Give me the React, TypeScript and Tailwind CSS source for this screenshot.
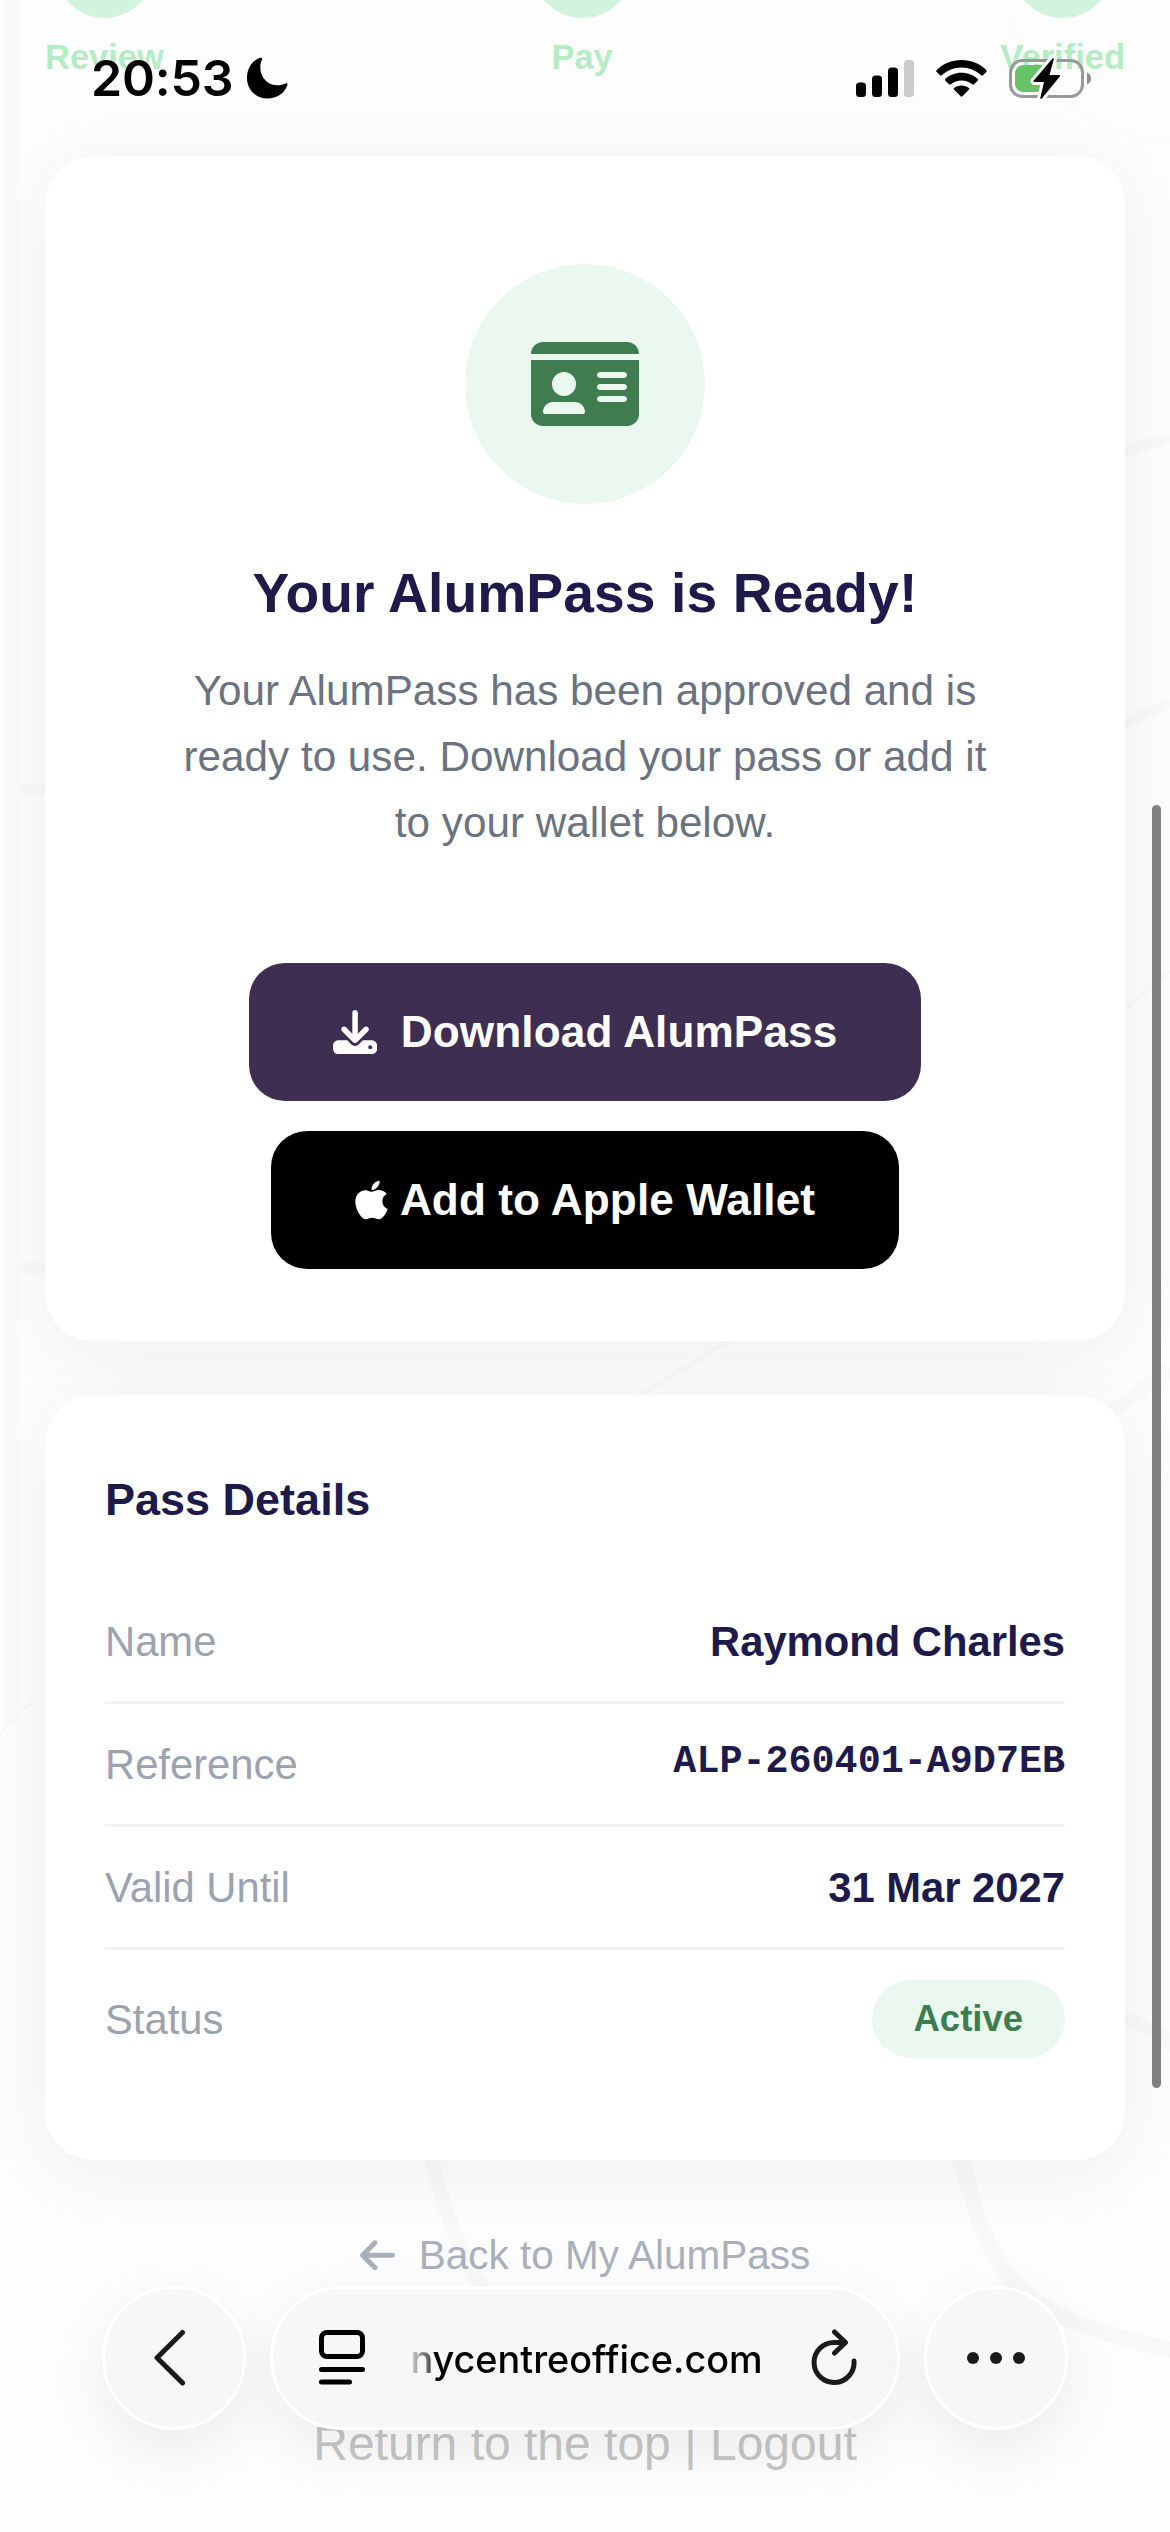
import { FaApple, FaArrowLeft, FaDownload, FaIdCard } from 'react-icons/fa6';

const steps = ['Review', 'Pay', 'Verified'];

const details = [
  { label: 'Name', value: 'Raymond Charles' },
  { label: 'Reference', value: 'ALP-260401-A9D7EB', mono: true },
  { label: 'Valid Until', value: '31 Mar 2027' },
];

const cardShadow = 'shadow-[0_12px_72px_rgba(30,27,75,0.06)]';
const barShadow = 'shadow-[0_20px_60px_rgba(0,0,0,0.07)]';

// Faint curved strokes behind the page content
function BackgroundPattern() {
  return (
    <svg
      className="absolute inset-0 pointer-events-none"
      width="1170"
      height="2532"
      viewBox="0 0 1170 2532"
      fill="none"
      stroke="#f9f9f9"
    >
      <path d="M11 0V1725" strokeWidth="16" stroke="#fafafa" />
      <path d="M1010 20Q1050 130 1170 142" strokeWidth="3" stroke="#fbfbfb" />
      <path d="M1110 456Q1140 446 1170 438" strokeWidth="12" />
      <path d="M1110 730Q1140 716 1170 702" strokeWidth="11" />
      <path d="M1110 1020L1170 972" strokeWidth="4" />
      <path d="M1110 1412L1170 1370" strokeWidth="14" />
      <path d="M640 1396L735 1336" strokeWidth="5" stroke="#f9f9fa" />
      <path d="M20 790H50M20 1268H50" strokeWidth="12" />
      <path d="M0 1735Q20 1705 50 1695" strokeWidth="3" />
      <path d="M430 2150Q444 2230 500 2320" strokeWidth="15" stroke="#f8f8f8" />
      <path d="M961 2150Q975 2235 1012 2280T1180 2352" strokeWidth="16" stroke="#f8f8f8" />
      <path d="M1120 2018Q1150 2026 1176 2046" strokeWidth="15" />
    </svg>
  );
}

function StatusBar() {
  return (
    <div className="absolute inset-x-0 top-0 z-20 flex h-[156px] items-center justify-between pl-[91px] pr-[79px] text-black">
      <div className="flex items-center gap-[13px]">
        <span className="font-[Inter,sans-serif] text-[50px] font-semibold leading-none tracking-[-0.2px]">20:53</span>
        <svg width="42" height="42" viewBox="0 0 42 42">
          <path
            d="M14 .8C15.6 .3 16.5 1.2 16 2.6C13 9 14 18.500 19.500 23.500C25 29 33.500 29.500 39.500 26.500C41 26 41.800 27 41.300 28.500C38.300 36.500 30.500 41.500 21.500 41.500C9.500 41.500 1 32.500 1 21C1 11.500 6 3.800 14 .8Z"
            fill="currentColor"
          />
        </svg>
      </div>
      <div className="flex items-center gap-[22px]">
        <svg width="58" height="37" viewBox="0 0 58 37">
          <rect y="22.500" width="10" height="14.500" rx="3.500" />
          <rect x="16" y="15.500" width="10" height="21.500" rx="3.500" />
          <rect x="32" y="7.500" width="10" height="29.500" rx="3.500" />
          <rect x="48" width="10" height="37" rx="3.500" fill="#cbcbcb" />
        </svg>
        <svg width="51" height="37" viewBox="0 0 51 37">
          <path d="M25.500 0C35.500 0 44 3.800 50.300 9.900C50.900 10.500 50.900 11.300 50.300 11.900L47 15.200C46.500 15.700 45.700 15.700 45.100 15.200C39.900 10.400 33 7.500 25.500 7.500S11.100 10.400 5.900 15.200C5.300 15.700 4.500 15.700 4 15.200L.7 11.900C.1 11.300 .1 10.500 .7 9.900C7 3.800 15.500 0 25.500 0Z" />
          <path d="M25.500 12.700C31.900 12.700 37.500 15 41.600 18.800C42.200 19.400 42.200 20.100 41.600 20.700L38 24.200C37.500 24.700 36.700 24.700 36.200 24.200C33.300 21.800 29.600 20.400 25.500 20.400S17.700 21.800 14.800 24.200C14.300 24.700 13.500 24.700 13 24.200L9.400 20.700C8.800 20.100 8.800 19.400 9.400 18.800C13.500 15 19.100 12.700 25.500 12.700Z" />
          <path d="M25.500 25.500C28.300 25.500 30.900 26.400 32.900 27.900C33.500 28.400 33.500 29.100 33 29.600L26.400 36.300C25.900 36.900 25.100 36.900 24.600 36.300L18 29.600C17.500 29.100 17.500 28.400 18.100 27.900C20.100 26.400 22.700 25.500 25.500 25.500Z" />
        </svg>
        <svg width="82" height="43" viewBox="0 0 82 43">
          <rect x="1.500" y="3.500" width="72" height="36" rx="12" fill="none" stroke="#999" strokeWidth="3" />
          <path d="M78 15.500C80.500 16.500 82 18.500 82 21.500S80.500 26.500 78 27.500Z" fill="#8e8e8e" />
          <path d="M15 8H33V35H15C9.500 35 6 31.500 6 26.500V16.500C6 11.500 9.500 8 15 8Z" fill="#65c466" />
          <path
            d="M43.500 1.500L24.800 23.500C24.200 24.300 24.500 25 25.500 25H35L31.300 41C31.200 42 32 42.300 32.800 41.500L50.800 19.500C51.300 18.700 51 18 50 18H40.500L44.800 2.200C45 1.200 44.200 .8 43.500 1.500Z"
            stroke="#fff"
            strokeWidth="6"
            paintOrder="stroke"
          />
        </svg>
      </div>
    </div>
  );
}

function BrowserBar() {
  return (
    <div className="absolute inset-x-0 top-[2286px] z-20 flex h-[144px] justify-center gap-6">
      <div className={`flex size-[144px] items-center justify-center rounded-full border-3 border-white bg-[#f7f7f7] ${barShadow}`}>
        <svg width="40" height="60" viewBox="0 0 40 60" fill="none" stroke="#1b1b1b" strokeWidth="5" strokeLinecap="round" strokeLinejoin="round">
          <path d="M28.500 4.500L3 29.700L28.500 54.900" />
        </svg>
      </div>
      <div className={`flex w-[630px] items-center justify-between rounded-full border-3 border-white bg-[#f7f7f7] pl-[46px] pr-[40px] ${barShadow}`}>
        <svg width="46" height="56" viewBox="0 0 46 56" fill="none" stroke="#000" strokeWidth="5" strokeLinecap="round">
          <rect x="2.500" y="2.500" width="41" height="24" rx="5.500" />
          <path d="M2.500 39.500H43.500M2.500 52H30.500" />
        </svg>
        <span className="-ml-[3px] pt-[2px] font-[Inter,sans-serif] text-[37.800px] font-medium leading-[52px] text-black [mask-image:linear-gradient(to_right,rgba(0,0,0,0.15),rgba(0,0,0,0.6)_19px,#000_22px)]">
          nycentreoffice.com
        </span>
        <svg width="46" height="58" viewBox="0 0 46 58" fill="none" stroke="#1b1b1b" strokeWidth="5" strokeLinecap="round" strokeLinejoin="round">
          <path d="M43 32A20 20 0 1 1 23 13.500H34" />
          <path d="M23.500 3L34.500 13.500L23.500 24" />
        </svg>
      </div>
      <div className={`flex size-[144px] items-center justify-center gap-[11px] rounded-full border-3 border-white bg-[#f7f7f7] ${barShadow}`}>
        <span className="size-3 rounded-full bg-[#1b1b1b]" />
        <span className="size-3 rounded-full bg-[#1b1b1b]" />
        <span className="size-3 rounded-full bg-[#1b1b1b]" />
      </div>
    </div>
  );
}

export default function App() {
  return (
    <div className="relative h-[2532px] w-[1170px] overflow-hidden bg-[#fdfdfd] font-['Liberation_Sans',Arial,sans-serif]">
      <BackgroundPattern />
      <StatusBar />

      <main className="relative -mt-[81px] flex flex-col px-[45px]">
        {/* Progress steps, scrolled partly under the status bar */}
        <div className="flex h-[237px] justify-between">
          {steps.map((step) => (
            <div key={step} className="flex flex-col items-center">
              <span className="size-[99px] rounded-full bg-[#d2f3dc]" />
              <span className="mt-[19px] text-[34.500px] font-bold leading-[40px] text-[#b4edc4]">{step}</span>
            </div>
          ))}
        </div>

        <section className={`flex h-[1185px] flex-col items-center rounded-[48px] bg-white pt-[108px] ${cardShadow}`}>
          <div className="flex size-[240px] items-center justify-center rounded-full bg-[#eaf8f0]">
            <FaIdCard className="h-[96px] w-[108px] text-[#3f7d50]" />
          </div>
          <h1 className="mt-[53px] text-[55.200px] font-bold leading-[72px] tracking-[0.1px] text-[#1e1b4b]">
            Your AlumPass is Ready!
          </h1>
          <p className="mt-[29px] w-[830px] text-center text-[42.240px] leading-[66px] text-[#6b7280]">
            Your AlumPass has been approved and is ready to use. Download your pass or add it to your wallet below.
          </p>
          <button className="mt-[107px] flex h-[138px] items-center gap-6 rounded-[36px] bg-[#3d2e52] px-[84px] text-[44.160px] font-bold tracking-[0.08px] text-white">
            <FaDownload />
            Download AlumPass
          </button>
          <button className="mt-[30px] flex h-[138px] items-center gap-3 rounded-[36px] bg-black px-[84px] text-[44.160px] font-bold tracking-[0.08px] text-white">
            <FaApple className="w-[33px]" />
            Add to Apple Wallet
          </button>
        </section>

        <section className={`mt-[54px] h-[765px] rounded-[48px] bg-white px-[60px] pt-[72px] ${cardShadow}`}>
          <h2 className="mb-[49px] text-[45px] font-bold leading-[65px] text-[#1e1b4b]">Pass Details</h2>
          {details.map(({ label, value, mono }) => (
            <div key={label} className="flex h-[123px] items-center justify-between border-b-3 border-[#f3f3f4] pt-[2px] text-[41.760px]">
              <span className="text-[#9ca3af]">{label}</span>
              {mono ? (
                <span className="pb-1 font-['Courier_New','Liberation_Mono',monospace] text-[38.400px] font-bold text-[#1e1b4b]">{value}</span>
              ) : (
                <span className="font-bold text-[#1e1b4b]">{value}</span>
              )}
            </div>
          ))}
          <div className="flex h-[138px] items-center justify-between text-[41.760px]">
            <span className="pt-[2px] text-[#9ca3af]">Status</span>
            <span className="flex h-[78px] items-center rounded-full bg-[#eaf8f0] px-[42px] text-[36.480px] font-bold text-[#3f7d50]">
              Active
            </span>
          </div>
        </section>

        <a className="mt-[65px] flex h-[60px] items-center justify-center gap-6 text-[40.500px] text-[#a9b0bc]">
          <FaArrowLeft className="w-[35px]" />
          Back to My AlumPass
        </a>
        <p className="mt-[129px] text-center text-[48px] leading-[60px] text-[#c6c6c6]">Return to the top | Logout</p>
      </main>

      {/* Scroll indicator */}
      <div className="absolute right-[9px] top-[805px] z-10 h-[1283px] w-[9px] rounded-full bg-[#808080]" />

      <BrowserBar />
    </div>
  );
}
